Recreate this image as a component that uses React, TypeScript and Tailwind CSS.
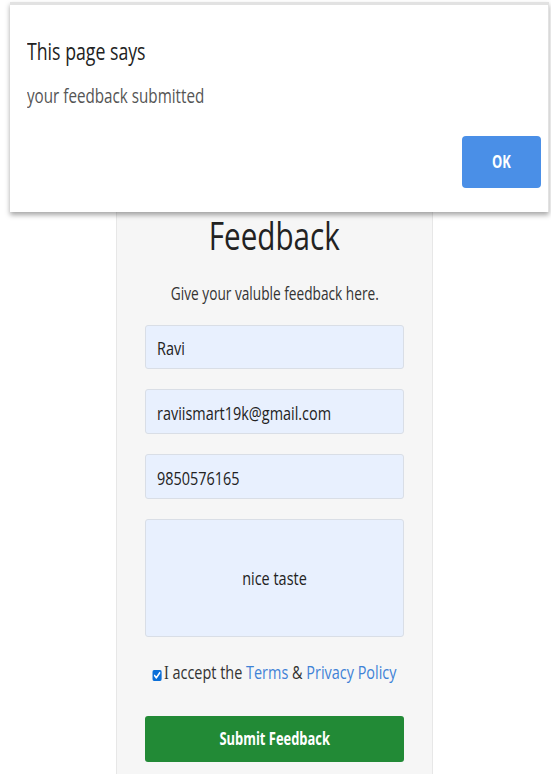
export default function App() {
  return (
    <div className="relative w-[551px] h-[774px] overflow-hidden bg-white font-['Open_Sans',sans-serif]">
      <div className="ml-[116px] w-[317px] h-full bg-[#f6f6f6] border-x border-[#e7e7e7] px-[28px] pt-[212px] flex flex-col">
        <h1 className="text-center text-[39px] leading-[46px] text-[#222] font-medium whitespace-nowrap">
          <span className="inline-block scale-x-[0.76]">Feedback</span>
        </h1>
        <p className="mt-[23px] text-center text-[18px] leading-[24px] text-[#333] whitespace-nowrap -mx-[28px]">
          <span className="inline-block scale-x-[0.76]">Give your valuble feedback here.</span>
        </p>
        <div className="mt-[20px] flex flex-col gap-[20px]">
          <div className="h-[44px] rounded-[3px] border border-[#d9dee6] bg-[#e8f0fe] pl-[11px] pt-[3px] flex items-center text-[19px] text-[#222]">
            <span className="inline-block origin-left scale-x-[0.76]">Ravi</span>
          </div>
          <div className="h-[45px] rounded-[3px] border border-[#d9dee6] bg-[#e8f0fe] pl-[11px] pt-[3px] flex items-center text-[19px] text-[#222]">
            <span className="inline-block origin-left scale-x-[0.76]">raviismart19k@gmail.com</span>
          </div>
          <div className="h-[45px] rounded-[3px] border border-[#d9dee6] bg-[#e8f0fe] pl-[11px] pt-[3px] flex items-center text-[19px] text-[#222]">
            <span className="inline-block origin-left scale-x-[0.76]">9850576165</span>
          </div>
          <div className="h-[118px] rounded-[3px] border border-[#d9dee6] bg-[#e8f0fe] flex items-center justify-center text-[19px] text-[#222]">
            <span className="inline-block scale-x-[0.76]">nice taste</span>
          </div>
        </div>
        <div className="mt-[23px] -mx-[28px] flex justify-center text-[19px] leading-[24px] text-[#333]">
          <span className="inline-block scale-x-[0.76] whitespace-nowrap">
            <span className="inline-flex items-center justify-center w-[12px] h-[11px] rounded-[2px] bg-[#0b6fd8] mr-[3px] align-[-1px]">
              <svg width="10" height="9" viewBox="0 0 10 9" fill="none">
                <path d="M1.8 4.6 L4 6.8 L8.4 1.8" stroke="white" strokeWidth="1.9" strokeLinecap="round" strokeLinejoin="round" />
              </svg>
            </span>
            <span className="font-['Liberation_Serif',serif]">I</span> accept the <span className="text-[#3f82d6]">Terms</span> &amp; <span className="text-[#3f82d6]">Privacy Policy</span>
          </span>
        </div>
        <div className="mt-[31px] h-[46px] rounded-[3px] bg-[#228a36] flex items-center justify-center text-[17px] font-bold text-white">
          <span className="inline-block scale-x-[0.76]">Submit Feedback</span>
        </div>
      </div>

      <div className="absolute left-0 top-0 w-[551px] pt-[2px] pl-[10px] bg-white">
        <div className="w-[539px] h-[210px] bg-white border-t-[3px] border-r border-[#e2e2e2] shadow-[0_3px_5px_rgba(0,0,0,0.35)] pl-[17px] pr-[7px] pt-[31px] flex flex-col">
          <div className="text-[23px] leading-[30px] text-[#222]">
            <span className="inline-block origin-left scale-x-[0.77]">This page says</span>
          </div>
          <div className="mt-[17px] text-[19.5px] leading-[26px] text-[#555]">
            <span className="inline-block origin-left scale-x-[0.78]">your feedback submitted</span>
          </div>
          <div className="mt-[27px] flex justify-end">
            <div className="w-[79px] h-[52px] rounded-[4px] bg-[#4a8fe7] flex items-center justify-center text-[17px] font-bold text-white">
              <span className="inline-block scale-x-[0.76]">OK</span>
            </div>
          </div>
        </div>
      </div>
    </div>
  );
}
